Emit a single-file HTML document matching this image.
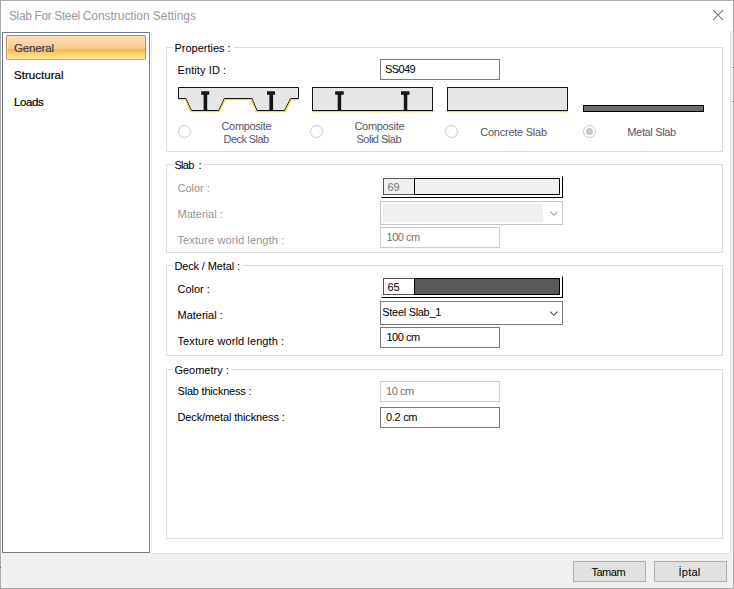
<!DOCTYPE html>
<html><head><meta charset="utf-8"><title>Slab For Steel Construction Settings</title>
<style>
html,body{margin:0;padding:0;}
body{width:734px;height:589px;overflow:hidden;background:#fff;font-family:"Liberation Sans",sans-serif;font-size:11px;color:#000;position:relative;}
.abs,.abs *{position:absolute;box-sizing:border-box;}
.abs span{position:static;}
.t{white-space:pre;line-height:13px;height:13px;}
.dis{color:#939393;}
.dis2{color:#747474;}
.win{left:0;top:0;width:734px;height:589px;border:1px solid #aaa;}
.title{left:9px;top:8.4px;font-size:12px;line-height:16px;height:16px;color:#999;white-space:pre;letter-spacing:-0.18px;}
.footer{left:1px;top:554px;width:732px;height:34px;background:#f0f0f0;}
.strip{left:730px;top:31px;width:3px;height:523px;background:#f2f2f2;border-left:1px solid #e0e0e0;}
.side{left:2px;top:32px;width:148px;height:521px;border:1px solid #737b86;background:#fff;}
.sideline{left:151px;top:31px;width:1px;height:523px;background:#ebebeb;}
.navsel{left:6px;top:35px;width:140px;height:25px;border:1px solid #b8945a;border-top-color:#a98b57;border-bottom-color:#b7a888;border-radius:2px;background:linear-gradient(to bottom,#fdddb7 0%,#fcd5a6 30%,#f9c886 56%,#f7b54a 59%,#f9c05a 66%,#fbd074 76%,#fdde88 90%,#fde698 100%);box-shadow:inset 1px 0 0 rgba(255,240,215,.6);}
.nav{-webkit-text-stroke:0.2px currentColor;font-size:11.5px;line-height:16px;height:16px;white-space:pre;left:14px;}
.grp{border:1px solid #dcdcdc;left:166px;width:557px;}
.leg{background:#fff;padding:0 3px 0 1.4px;left:173px;}
.inp{border:1px solid #7a7a7a;background:#fff;left:380px;width:120px;height:21px;}
.inp.d{border-color:#ccc;}
.inp .t{left:5px;top:3px;}
.btn{border:1px solid #adadad;background:#e1e1e1;height:21px;top:561px;width:73px;text-align:center;line-height:21px;font-size:11px;}
.radio{width:13px;height:13px;border:1px solid #cacaca;border-radius:50%;background:#fff;}
.rl{color:#55556d;font-size:11px;line-height:13px;height:13px;white-space:pre;}
.combo{left:380px;width:183px;height:24px;border:1px solid #7a7a7a;background:#fff;}
.combo.d{border-color:#c6c6c6;}
.sw{left:381px;width:182px;height:22px;border-right:1px solid #000;border-bottom:1px solid #000;border-top:1px solid #f4f4f4;border-left:1px solid #f4f4f4;background:#fff;}
</style></head><body>
<div class="abs">
<div class="win"></div>
<div class="footer"></div>
<div class="strip"></div>
<div class="title"><span style="letter-spacing:-0.38px">Slab For Steel </span><span style="letter-spacing:-0.04px">Construction Settings</span></div>
<svg style="left:712px;top:9px" width="13" height="13" viewBox="0 0 13 13"><path d="M1.1 1.1 L11 11 M11 1.1 L1.1 11" stroke="#6e6e6e" stroke-width="1.05" fill="none"/></svg>

<div style="left:733px;top:67px;width:1px;height:1px;background:#444"></div><div style="left:733px;top:101px;width:1px;height:1px;background:#444"></div><div style="left:0;top:567px;width:1px;height:1px;background:#666"></div>
<div class="side"></div>
<div class="sideline"></div>
<div style="left:1px;top:553px;width:150px;height:1px;background:#f0f0f0"></div>
<div style="left:151px;top:553px;width:580px;height:1px;background:#dcdcdc"></div>
<div class="navsel"></div>
<div class="nav" style="top:40px;color:#3c3c50;letter-spacing:-0.16px">General</div>
<div class="nav" style="top:67px;letter-spacing:0.03px">Structural</div>
<div class="nav" style="top:94px;letter-spacing:-0.41px">Loads</div>

<!-- Properties -->
<div class="grp" style="top:47px;height:105px"></div>
<div class="t leg" style="top:42px">Properties :</div>
<div class="t" style="left:177.5px;top:64px;letter-spacing:0.1px">Entity ID :</div>
<div class="inp" style="top:59px"><div class="t" style="letter-spacing:-0.6px;left:4.1px">SS049</div></div>

<svg style="left:176px;top:85px" width="126" height="30" viewBox="0 0 126 30">
 <path d="M2.5 2.5 H122.5 V13.5 H114.6 L108.6 25.5 H81 L76 13.5 H48.4 L42.8 25.5 H15.5 L9.8 13.5 H2.5 Z" fill="#e6e6e6" stroke="#161616" stroke-width="1"/>
 <path d="M2 14.6 H9.2 L14.9 26.6 H43.5 L49.1 14.6 H75.3 L80.3 26.6 H109.3 L115.3 14.6 H123" fill="none" stroke="#f3d53a" stroke-width="1.1"/>
 <path d="M25.2 6.3 H33.2 V9.8 H31.2 V25 H27.6 V9.8 H25.2 Z M91 6.3 H99 V9.8 H97.1 V25 H93.4 V9.8 H91 Z" fill="#161616"/>
</svg>
<svg style="left:310px;top:85px" width="126" height="30" viewBox="0 0 126 30">
 <rect x="2.5" y="2.5" width="120" height="23" fill="#e6e6e6" stroke="#161616"/>
 <path d="M2 26.7 H123" stroke="#f3d53a" stroke-width="1.3" fill="none"/>
 <path d="M25.2 6.3 H33.7 V9.8 H31.2 V25 H27.7 V9.8 H25.2 Z M91 6.3 H99.5 V9.8 H97.3 V25 H93.8 V9.8 H91 Z" fill="#161616"/>
</svg>
<svg style="left:445px;top:85px" width="126" height="30" viewBox="0 0 126 30">
 <rect x="2.5" y="2.5" width="120" height="23" fill="#e6e6e6" stroke="#161616"/>
 <path d="M2 26.7 H123" stroke="#f3d53a" stroke-width="1.3" fill="none"/>
</svg>
<svg style="left:581px;top:85px" width="126" height="30" viewBox="0 0 126 30">
 <rect x="2.5" y="20.5" width="120" height="6" fill="#6e6e6e" stroke="#000"/>
</svg>

<div class="radio" style="left:178px;top:125px"></div>
<div class="radio" style="left:310px;top:125px"></div>
<div class="radio" style="left:445px;top:125px"></div>
<div class="radio" style="left:583px;top:125px"><div style="left:2px;top:2px;width:7px;height:7px;border-radius:50%;background:#c9c9c9"></div></div>
<div class="rl" style="left:221.5px;top:120px;letter-spacing:-0.32px">Composite</div>
<div class="rl" style="left:223.5px;top:133px;letter-spacing:-0.56px">Deck Slab</div>
<div class="rl" style="left:354.5px;top:120px;letter-spacing:-0.32px">Composite</div>
<div class="rl" style="left:356.5px;top:133px;letter-spacing:-0.5px">Solid Slab</div>
<div class="rl" style="left:480.3px;top:126px;letter-spacing:-0.25px">Concrete Slab</div>
<div class="rl" style="left:627.3px;top:126px;letter-spacing:-0.35px">Metal Slab</div>

<!-- Slab -->
<div class="grp" style="top:164px;height:89px"></div>
<div class="t leg" style="top:159px;letter-spacing:-0.2px"><span style="letter-spacing:-0.65px;margin-right:1.8px">Slab</span> :</div>
<div class="t dis" style="left:177.5px;top:182px">Color :</div>
<div class="t dis" style="left:177.5px;top:208px">Material :</div>
<div class="t dis" style="left:177.5px;top:234px;letter-spacing:0.1px">Texture world length :</div>
<div class="sw" style="top:176px">
  <div style="left:1px;top:1px;width:32px;height:17px;border:1px solid #555;background:#f0f0f0"><div class="t dis2" style="left:3.5px;top:2px">69</div></div>
  <div style="left:32px;top:1px;width:146px;height:17px;border:1px solid #000;background:#f0f0f0"></div>
</div>
<div class="combo d" style="top:201px"><div style="left:2px;top:2px;width:160px;height:18px;background:#f0f0f0"></div>
 <svg style="left:168px;top:8px" width="11" height="8" viewBox="0 0 11 8"><path d="M1.2 1.6 L4.9 5.3 L8.6 1.6" stroke="#a2a2a2" stroke-width="1.1" fill="none"/></svg></div>
<div class="inp d" style="top:227px"><div class="t dis2" style="letter-spacing:-0.5px;left:5.6px">100 cm</div></div>

<!-- Deck / Metal -->
<div class="grp" style="top:265px;height:91px"></div>
<div class="t leg" style="top:260px;letter-spacing:-0.13px">Deck / Metal :</div>
<div class="t" style="left:177.5px;top:283px">Color :</div>
<div class="t" style="left:177.5px;top:309px">Material :</div>
<div class="t" style="left:177.5px;top:335px;letter-spacing:0.1px">Texture world length :</div>
<div class="sw" style="top:276px">
  <div style="left:1px;top:1px;width:32px;height:17px;border:1px solid #555;background:#fff"><div class="t" style="left:3.5px;top:2px">65</div></div>
  <div style="left:32px;top:1px;width:146px;height:17px;border:1px solid #000;background:#5a5a5a"></div>
</div>
<div class="combo" style="top:301px"><div class="t" style="left:1.3px;top:4px;letter-spacing:-0.3px">Steel Slab_1</div>
 <svg style="left:168px;top:8px" width="11" height="8" viewBox="0 0 11 8"><path d="M1.2 1.6 L4.9 5.3 L8.6 1.6" stroke="#505050" stroke-width="1.1" fill="none"/></svg></div>
<div class="inp" style="top:327px"><div class="t" style="letter-spacing:-0.5px;left:5.5px">100 cm</div></div>

<!-- Geometry -->
<div class="grp" style="top:369px;height:170px"></div>
<div class="t leg" style="top:364px">Geometry :</div>
<div class="t" style="left:177.5px;top:385px;letter-spacing:-0.2px">Slab thickness :</div>
<div class="t" style="left:177.5px;top:411px;letter-spacing:-0.13px">Deck/metal thickness :</div>
<div class="inp d" style="top:381px"><div class="t dis2" style="letter-spacing:-0.46px">10 cm</div></div>
<div class="inp" style="top:407px"><div class="t" style="letter-spacing:-0.3px">0.2 cm</div></div>

<div class="btn" style="left:573px;letter-spacing:-0.45px;padding-right:2.4px">Tamam</div>
<div class="btn" style="left:654px;letter-spacing:0.2px;padding-right:2px">İptal</div>
</div>
</body></html>
